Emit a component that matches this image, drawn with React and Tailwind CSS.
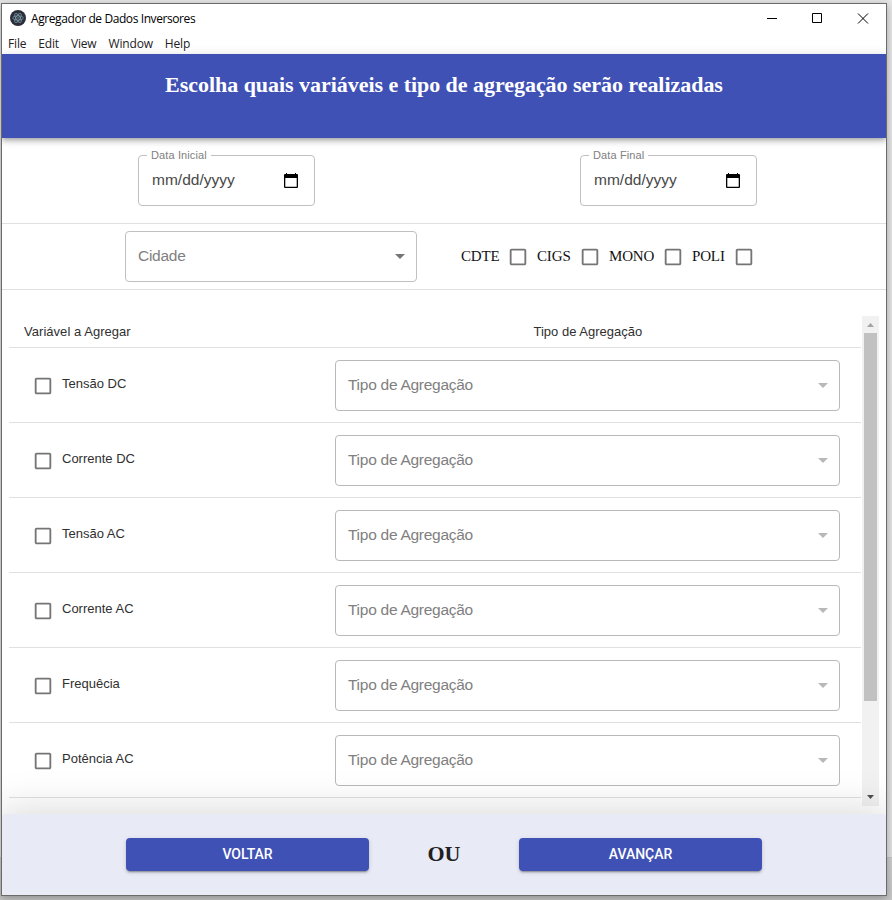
const rows = ['Tensão DC', 'Corrente DC', 'Tensão AC', 'Corrente AC', 'Frequêcia', 'Potência AC'];
const techs = [
  { name: 'CDTE', box: 'w-[76px]' },
  { name: 'CIGS', box: 'w-[72px]' },
  { name: 'MONO', box: 'w-[83px]' },
  { name: 'POLI', box: 'w-[71px]' },
];

function Checkbox() {
  return (
    <svg className="size-[22px] shrink-0 fill-[#757575]" viewBox="0 0 24 24">
      <path d="M19 5v14H5V5h14m0-2H5c-1.1 0-2 .9-2 2v14c0 1.1.9 2 2 2h14c1.1 0 2-.9 2-2V5c0-1.1-.9-2-2-2z" />
    </svg>
  );
}

function Caret({ className }) {
  return (
    <svg className={`size-6 shrink-0 ${className}`} viewBox="0 0 24 24" fill="currentColor">
      <path d="M7 10l5 5 5-5z" />
    </svg>
  );
}

function ElectronIcon() {
  return (
    <svg className="mb-0.5 size-4" viewBox="0 0 16 16" fill="none">
      <circle cx="8" cy="8" r="8" fill="#2b2e3a" />
      <g stroke="#8fb4c0" strokeWidth="0.6">
        <ellipse cx="8" cy="8" rx="5.2" ry="2.1" />
        <ellipse cx="8" cy="8" rx="5.2" ry="2.1" transform="rotate(60 8 8)" />
        <ellipse cx="8" cy="8" rx="5.2" ry="2.1" transform="rotate(120 8 8)" />
      </g>
      <circle cx="8" cy="8" r="0.7" fill="#8fb4c0" />
    </svg>
  );
}

function DateField({ label }) {
  return (
    <fieldset className="h-[56px] w-[177px] rounded border border-[#c0c0c0] pr-4 pl-[13px]">
      <legend className="-ml-[5px] h-[11px] px-1 text-[11px] leading-[11px] tracking-[0.12px] text-[#808080]">{label}</legend>
      <div className="flex h-[39px] items-center justify-between">
        <span className="pb-px text-[15.5px] tracking-[0.02px] text-[#484848]">mm/dd/yyyy</span>
        <svg className="h-[15px] w-[14px]" viewBox="0 0 14 15">
          <path fill="#000" fillRule="evenodd" d="M2 0h1v1h8V0h1v1h1q1 0 1 1v12q0 1-1 1H1q-1 0-1-1V2q0-1 1-1h1zM1.3 5v8.7h11.4V5z" />
        </svg>
      </div>
    </fieldset>
  );
}

function FooterButton({ children }) {
  return (
    <button className="h-[33px] w-[243px] rounded bg-[#3f51b5] pb-px font-['Roboto',sans-serif] text-[14px] font-medium tracking-[-0.05px] text-white shadow-[0_3px_1px_-2px_rgba(0,0,0,0.2),0_2px_2px_0_rgba(0,0,0,0.14),0_1px_5px_0_rgba(0,0,0,0.12)]">
      {children}
    </button>
  );
}

export default function App() {
  return (
    <div className="h-[900px] w-[892px] overflow-hidden bg-[linear-gradient(#e6e6e6_0,#e2e2e2_857px,#bcbcbc_857px,#cecece_858px,#c6c6c6_100%)] pt-[3px] pl-px font-['Liberation_Sans',Arial,sans-serif]">
      <div className="flex h-[893px] w-[886px] flex-col overflow-hidden border border-[#6b6b6b] bg-white shadow-[0_2px_8px_rgba(0,0,0,0.3)]">
        <div className="flex h-[30px] shrink-0 items-center pl-2 font-['Open_Sans',sans-serif]">
          <ElectronIcon />
          <span className="ml-[5px] text-[12px] tracking-[-0.41px] text-black">Agregador de Dados Inversores</span>
          <svg className="mr-[17px] mb-px ml-auto h-[11px] w-[102px]" viewBox="0 0 102 11" fill="none" stroke="#000">
            <path d="M0 5.5h10M45.5.5h9v9h-9zM91 .5l10 10M101 .5l-10 10" />
          </svg>
        </div>
        <div className="flex h-5 shrink-0 items-center gap-[12px] pl-1.5 font-['Open_Sans',sans-serif] text-[12px] tracking-[-0.17px] text-[#222]">
          <span>File</span><span>Edit</span><span>View</span><span>Window</span><span>Help</span>
        </div>
        <header className="relative h-[84px] shrink-0 bg-[#3f51b5] pt-[17px] text-center font-['Liberation_Serif',serif] text-[22px] leading-7 font-bold tracking-[-0.04px] text-white shadow-[0_2px_4px_-1px_rgba(0,0,0,0.2),0_4px_5px_0_rgba(0,0,0,0.14),0_1px_10px_0_rgba(0,0,0,0.12)]">
          Escolha quais variáveis e tipo de agregação serão realizadas
        </header>
        <div className="flex h-[86px] shrink-0 items-start gap-[265px] border-b border-[#e0e0e0] pt-[12px] pl-[136px]">
          <DateField label="Data Inicial" />
          <DateField label="Data Final" />
        </div>
        <div className="flex h-[66px] shrink-0 items-center border-b border-[#e0e0e0] pl-[123px]">
          <div className="flex h-[51px] w-[292px] items-center justify-between rounded border border-[#c0c0c0] pr-1 pl-3 text-[15.5px] tracking-[-0.27px] text-[#808080]">
            <span className="pb-0.5">Cidade</span>
            <Caret className="mb-px text-[#757575]" />
          </div>
          <div className="ml-[44px] flex font-['Liberation_Serif',serif] text-[15px] tracking-[-0.15px] text-[#111]">
            {techs.map((t) => (
              <div key={t.name} className={`flex items-center justify-between pr-2 ${t.box}`}>
                <span className="pb-px">{t.name}</span>
                <Checkbox />
              </div>
            ))}
          </div>
        </div>
        <main className="flex h-[524px] shrink-0 pt-[26px] pl-[7px]">
          <div className="h-[490px] w-[853px] overflow-hidden text-[13px] text-[#303030]">
            <div className="flex h-8 w-[852px] items-center border-b border-[#e0e0e0] pl-[15px]">
              <span className="w-[509.5px] tracking-[0.04px]">Variável a Agregar</span>
              <span>Tipo de Agregação</span>
            </div>
            {rows.map((r) => (
              <div key={r} className="flex h-[75px] w-[852px] items-center border-b border-[#e0e0e0] pl-[23px]">
                <div className="flex w-[303px] items-center gap-2 pt-0.5">
                  <Checkbox />
                  <span className="pb-1">{r}</span>
                </div>
                <div className="flex h-[51px] w-[505px] items-center justify-between rounded border border-[#b9b9b9] pr-1 pl-3 text-[15.5px] tracking-[-0.27px] text-[#808080]">
                  Tipo de Agregação
                  <Caret className="text-[#b8b8b8]" />
                </div>
              </div>
            ))}
          </div>
          <div className="flex h-[490px] w-[17px] flex-col items-center bg-[#f1f1f1]">
            <svg className="size-[17px]" viewBox="0 0 17 17" fill="#a3a3a3"><path d="M5 11h7L8.5 7z" /></svg>
            <div className="h-[368px] w-[13px] bg-[#c1c1c1]" />
            <svg className="mt-auto size-[17px]" viewBox="0 0 17 17" fill="#505050"><path d="M5 6h7l-3.5 4z" /></svg>
          </div>
        </main>
        <footer className="relative flex h-[81px] shrink-0 items-center rounded bg-[#e8eaf6] pl-[124px] shadow-[0_8px_10px_-5px_rgba(0,0,0,0.1),0_0_40px_4px_rgba(0,0,0,0.15)]">
          <FooterButton>VOLTAR</FooterButton>
          <span className="w-[150px] pb-0.5 text-center font-['Liberation_Serif',serif] text-[22px] font-bold text-[#202020]">OU</span>
          <FooterButton>AVANÇAR</FooterButton>
        </footer>
      </div>
    </div>
  );
}
